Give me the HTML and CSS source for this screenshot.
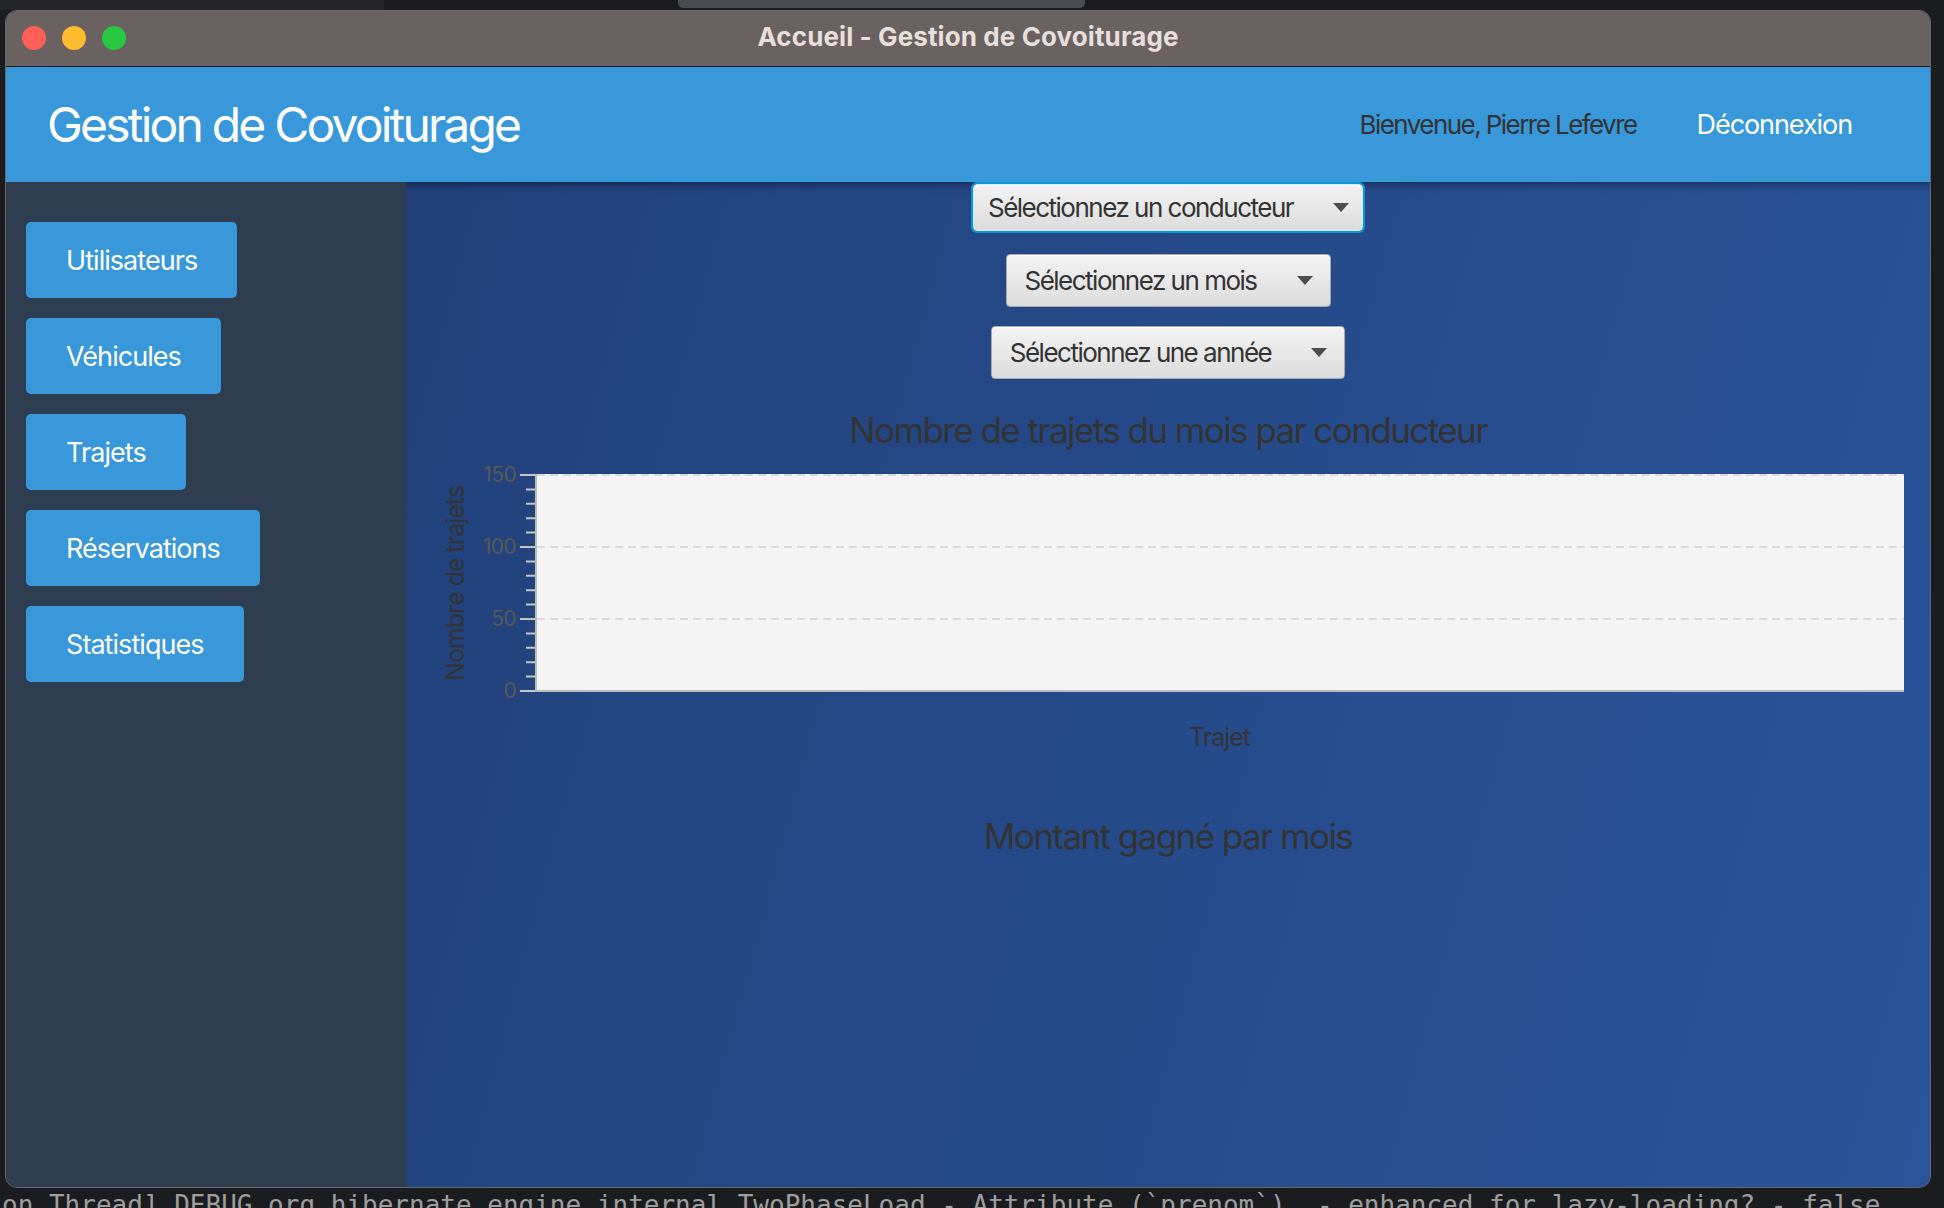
FILE: index.html
```html
<!DOCTYPE html>
<html lang="fr">
<head>
<meta charset="utf-8">
<title>Accueil - Gestion de Covoiturage</title>
<link rel="stylesheet" href="styles.css">
</head>
<body>
<div class="desk-top"><span class="dt-a"></span><span class="dt-bar"></span></div>
<div class="window">
  <div class="titlebar">
    <div class="lights"><span class="light red"></span><span class="light yellow"></span><span class="light green"></span></div>
    <div class="wtitle">Accueil - Gestion de Covoiturage</div>
    <div></div>
  </div>
  <header class="header">
    <h1 class="app-title">Gestion de Covoiturage</h1>
    <div class="user">
      <span class="welcome">Bienvenue, Pierre Lefevre</span>
      <span class="logout">Déconnexion</span>
    </div>
  </header>
  <div class="body">
    <nav class="sidebar">
      <button class="nav-btn">Utilisateurs</button>
      <button class="nav-btn">Véhicules</button>
      <button class="nav-btn">Trajets</button>
      <button class="nav-btn">Réservations</button>
      <button class="nav-btn">Statistiques</button>
    </nav>
    <main class="main">
      <div class="combo combo-focus"><span class="combo-text">Sélectionnez un conducteur</span><svg class="arrow" width="16" height="9" viewBox="0 0 16 9"><path d="M0 0H16L8 9Z"/></svg></div>
      <div class="combo combo-month"><span class="combo-text">Sélectionnez un mois</span><svg class="arrow" width="16" height="9" viewBox="0 0 16 9"><path d="M0 0H16L8 9Z"/></svg></div>
      <div class="combo combo-year"><span class="combo-text">Sélectionnez une année</span><svg class="arrow" width="16" height="9" viewBox="0 0 16 9"><path d="M0 0H16L8 9Z"/></svg></div>

      <section class="chart">
        <h2 class="chart-title">Nombre de trajets du mois par conducteur</h2>
        <div class="chart-grid">
          <div class="y-label">Nombre de trajets</div>
          <div class="tick-labels"><span>150</span><span>100</span><span>50</span><span>0</span></div>
          <svg class="ticks" width="15" height="218" viewBox="0 0 15 218">
            <path d="M0 1H15M0 73H15M0 145H15M0 217H15" stroke="#c6c6c6" stroke-width="2" fill="none"/>
            <path d="M6 15.4H15M6 29.8H15M6 44.2H15M6 58.6H15M6 87.4H15M6 101.8H15M6 116.2H15M6 130.6H15M6 159.4H15M6 173.8H15M6 188.2H15M6 202.6H15" stroke="#c6c6c6" stroke-width="2" fill="none"/>
          </svg>
          <div class="plot">
            <div class="band"></div>
            <div class="band"></div>
            <div class="band"></div>
          </div>
          <div class="x-label">Trajet</div>
        </div>
      </section>

      <section class="chart chart-amount">
        <h2 class="chart-title">Montant gagné par mois</h2>
      </section>
    </main>
  </div>
</div>
<div class="terminal">on Thread] DEBUG org.hibernate.engine.internal.TwoPhaseLoad - Attribute (`prenom`)  - enhanced for lazy-loading? - false</div>
</body>
</html>
```

FILE: styles.css
```css
* { box-sizing: border-box; }
html, body { margin: 0; padding: 0; }
body {
  width: 1944px;
  height: 1208px;
  overflow: hidden;
  background: #1b1c1f;
  font-family: Inter, "Noto Sans", sans-serif;
}

/* desktop strip above the window */
.desk-top { height: 10px; display: flex; background: #1b1c1f; }
.dt-a { width: 384px; background: #25262a; }
.dt-bar { margin-left: 294px; width: 407px; height: 8px; background: #4a4c53; border-radius: 0 0 5px 5px; }

/* window */
.window {
  margin-left: 5px;
  width: 1926px;
  height: 1178px;
  border: 1px solid #66676c;
  border-radius: 12px;
  overflow: hidden;
  display: flex;
  flex-direction: column;
  background: #2e3e50;
}
.titlebar {
  height: 56px;
  flex: none;
  background: #696260;
  border-bottom: 1px solid #1e1e1e;
  display: grid;
  grid-template-columns: 1fr auto 1fr;
  align-items: start;
}
.lights { display: flex; gap: 16px; padding: 15px 0 0 16px; }
.light { width: 24px; height: 24px; border-radius: 50%; }
.red { background: #fe5f57; }
.yellow { background: #febc2e; }
.green { background: #28c840; }
.wtitle {
  font-weight: 700;
  font-size: 26px;
  line-height: 52px;
  color: #e8dfdd;
  letter-spacing: 0.1px;
}

/* header */
.header {
  height: 115px;
  flex: none;
  background: #3898da;
  display: flex;
  align-items: center;
  padding: 0 78px 0 41px;
}
.app-title {
  margin: 0;
  font-weight: 400;
  font-size: 48px;
  line-height: 58px;
  color: #fff;
  letter-spacing: -2.8px;
}
.user {
  margin-left: auto;
  display: flex;
  align-items: center;
  gap: 60px;
  font-size: 27px;
  line-height: 32px;
  letter-spacing: -0.04em;
}
.welcome { color: #333; font-size: 26px; letter-spacing: -0.06em; }
.logout { color: #fff; }

/* body */
.body { flex: 1; display: flex; min-height: 0; }
.sidebar {
  width: 400px;
  flex: none;
  background: #2e3e50;
  padding: 40px 0 0 20px;
  display: flex;
  flex-direction: column;
  align-items: flex-start;
  gap: 20px;
}
.nav-btn {
  height: 76px;
  padding: 0 40px;
  border: 0;
  border-radius: 5px;
  background: #3898da;
  color: #fff;
  font-family: Inter, "Noto Sans", sans-serif;
  font-size: 27px;
  letter-spacing: -0.035em;
}

.main {
  flex: 1;
  background: linear-gradient(105deg, #21417a 0%, #2a549b 100%);
  box-shadow: inset 0 10px 10px -8px rgba(0, 0, 0, 0.45);
  display: flex;
  flex-direction: column;
  align-items: center;
}

/* combo boxes */
.combo {
  display: flex;
  align-items: center;
  gap: 40px;
  height: 53px;
  padding: 0 17px 0 18px;
  border: 1px solid #a9a9a9;
  border-radius: 4px;
  background: linear-gradient(#f3f3f3, #dcdcdc);
  box-shadow: inset 0 1px 0 #ffffff;
  color: #333;
  font-size: 26px;
  letter-spacing: -0.058em;
}
.combo-text { line-height: 30px; }
.arrow { flex: none; fill: #4d4d4d; }
.combo-focus {
  height: 47px;
  margin-top: 2px;
  padding: 0 13px 0 14px;
  border: 1px solid #d2ecf7;
  box-shadow: 0 0 0 2px #0a98d4, inset 0 1px 0 #ffffff;
}
.combo-month { margin-top: 23px; }
.combo-year { margin-top: 19px; }

/* charts */
.chart { align-self: stretch; display: flex; flex-direction: column; }
.chart-title {
  margin: 31px 0 0;
  text-align: center;
  font-size: 35px;
  line-height: 40px;
  font-weight: 400;
  color: #333;
  letter-spacing: -0.045em;
}
.chart-grid {
  display: grid;
  grid-template-columns: 30px 46px 19px 1fr;
  grid-template-rows: 218px auto;
  margin-top: 24px;
  padding: 0 26px 0 34px;
}
.y-label {
  grid-row: 1;
  grid-column: 1;
  align-self: center;
  justify-self: center;
  writing-mode: vertical-rl;
  transform: rotate(180deg);
  font-size: 25px;
  line-height: 30px;
  color: #333;
  letter-spacing: -0.04em;
  white-space: nowrap;
}
.tick-labels {
  grid-row: 1;
  grid-column: 2;
  margin: -11px 0;
  display: flex;
  flex-direction: column;
  justify-content: space-between;
  align-items: flex-end;
  font-size: 21px;
  line-height: 24px;
  color: #585858;
  letter-spacing: -0.03em;
}
.ticks { grid-row: 1; grid-column: 3; justify-self: end; display: block; }
.plot {
  grid-row: 1;
  grid-column: 4;
  background: #f4f4f4;
  border-left: 2px solid #bcbcbc;
  border-bottom: 2px solid #bcbcbc;
  display: flex;
  flex-direction: column;
}
.band {
  height: 72px;
  background: repeating-linear-gradient(to right, #d9d9d9 0 8px, transparent 8px 13px) top left / 100% 2px no-repeat;
}
.x-label {
  grid-row: 2;
  grid-column: 4;
  margin-top: 30px;
  text-align: center;
  font-size: 25px;
  line-height: 30px;
  color: #333;
  letter-spacing: -0.04em;
}
.chart-amount .chart-title { margin-top: 64px; }

/* terminal line under the window */
.terminal {
  margin-top: 4px;
  padding-left: 2px;
  font-family: "DejaVu Sans Mono", "Liberation Mono", monospace;
  font-size: 26px;
  line-height: 26px;
  color: #9e9e9e;
  white-space: pre;
}
```
